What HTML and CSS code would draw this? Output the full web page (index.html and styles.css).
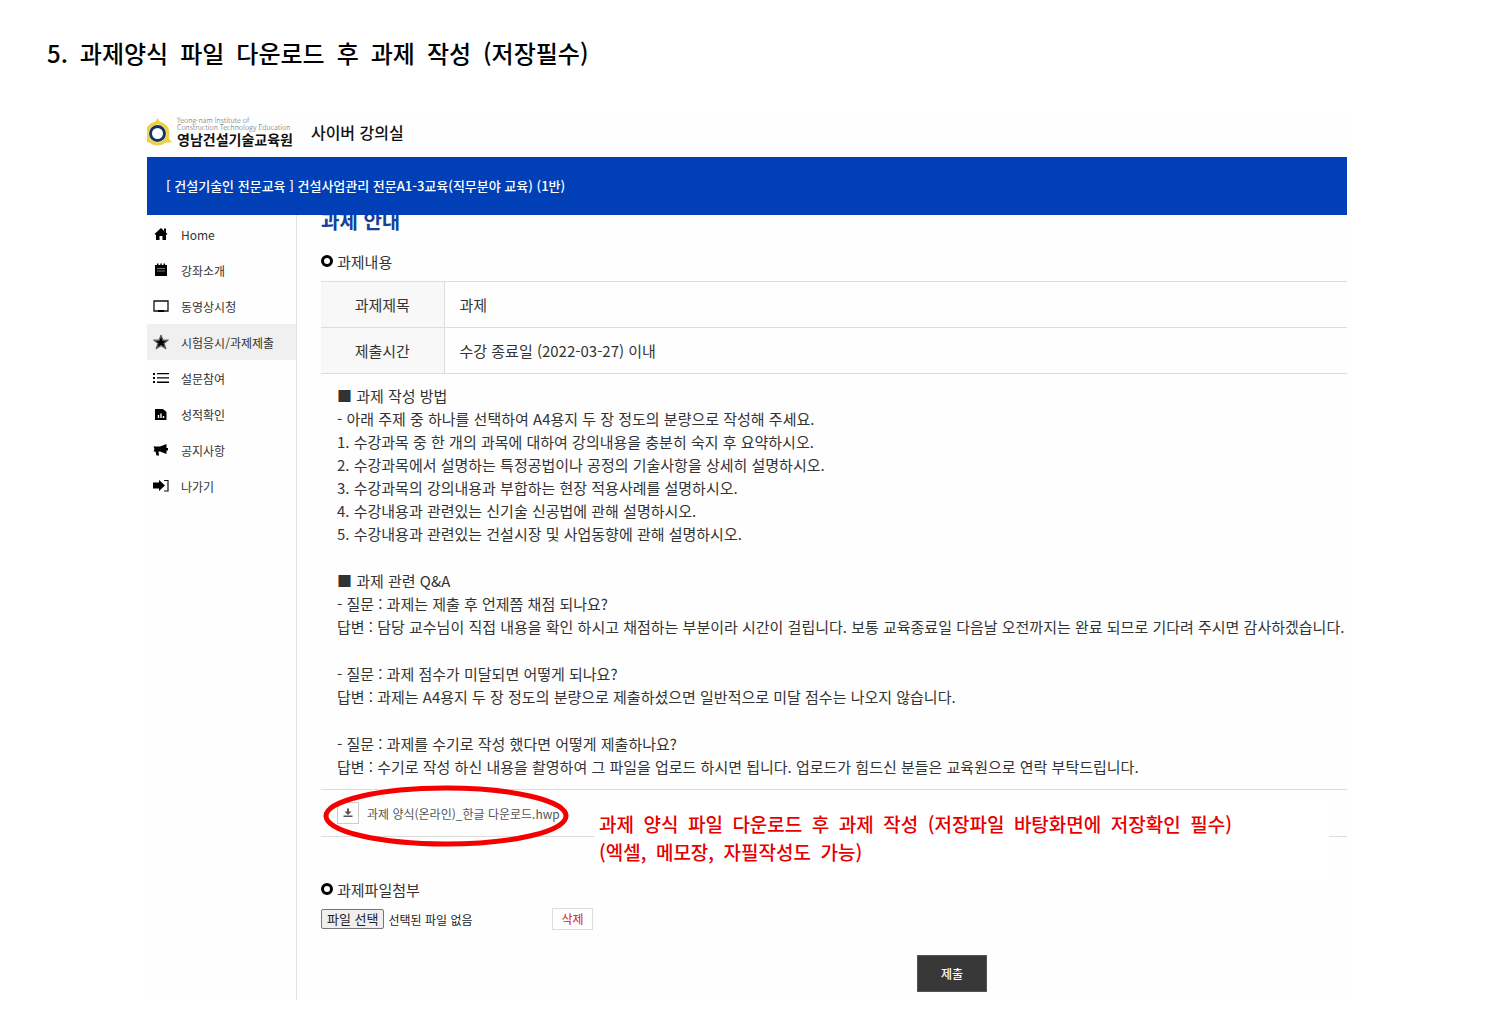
FILE: index.html
```html
<!DOCTYPE html>
<html lang="ko">
<head>
  <meta charset="UTF-8">
  <meta name="viewport" content="width=device-width, initial-scale=1.0">
  <title>사이버 강의실 - 과제 안내</title>
  <link rel="stylesheet" href="styles.css">
</head>
<body>
  <h1 class="step-title">5.&ensp;과제양식&ensp;파일&ensp;다운로드&ensp;후&ensp;과제&ensp;작성&ensp;(저장필수)</h1>

  <div class="classroom">
    <header class="site-header">
      <a class="logo" href="#">
        <svg class="logo-mark" viewBox="0 0 25 30" width="25" height="30">
          <path d="M10.500 1 L14 7 L7 7 Z M20 19 L25 25.500 L17 25.500 Z M0 19 L4 25.500 L0 25.500 Z" fill="#efcf45"/>
          <circle cx="10.500" cy="16.500" r="10.500" fill="#fff" stroke="#efcf45" stroke-width="3"/>
          <circle cx="10.500" cy="16.500" r="7" fill="#fff" stroke="#17345f" stroke-width="3"/>
        </svg>
        <span class="logo-text">
          <small>Yeong-nam Institute of</small>
          <small>Construction Technology Education</small>
          <strong>영남건설기술교육원</strong>
        </span>
      </a>
      <span class="site-name">사이버 강의실</span>
    </header>

    <div class="course-bar">[ 건설기술인 전문교육 ] 건설사업관리 전문A1-3교육(직무분야 교육) (1반)</div>

    <div class="content">
      <nav class="sidebar">
        <a href="#">
          <svg viewBox="0 0 16 16"><path d="M8 2 L14.500 8 L13 9 V14 H9.500 V10 H6.500 V14 H3 V9 L1.500 8 Z M11 2.500 H13 V6.500 L11 4.500 Z"/></svg>
          Home
        </a>
        <a href="#">
          <svg viewBox="0 0 16 16"><path d="M2 3 H4 V1.500 H5.500 V3 H7.300 V1.500 H8.700 V3 H10.500 V1.500 H12 V3 H14 V14 H2 Z"/><path d="M4 6.500 H12 M4 9 H12" stroke="#777" fill="none"/></svg>
          강좌소개
        </a>
        <a href="#">
          <svg viewBox="0 0 16 16"><path d="M1 3 H15 V13 H1 Z" fill="none" stroke="#111" stroke-width="1.300"/><path d="M5 12 H11 V14 H5 Z"/></svg>
          동영상시청
        </a>
        <a class="active" href="#">
          <svg viewBox="0 0 16 16"><path d="M8 1 L10 6 L15.500 6 L11.300 9.500 L13 15 L8 11.800 L3 15 L4.700 9.500 L0.500 6 L6 6 Z" fill="#777" stroke="#333" stroke-width=".7"/><path d="M8 3 L9.600 7 L13 7.200 L10.300 9.300 L11.500 13 L8 10.800 L4.500 13 L5.700 9.300 L3 7.200 L6.400 7 Z"/></svg>
          시험응시/과제제출
        </a>
        <a href="#">
          <svg viewBox="0 0 16 16"><path d="M0 3 H2 V5 H0 Z M0 7 H2 V9 H0 Z M0 11 H2 V13 H0 Z M4 3 H16 V4.300 H4 Z M4 7.300 H16 V8.600 H4 Z M4 11.600 H16 V12.900 H4 Z"/></svg>
          설문참여
        </a>
        <a href="#">
          <svg viewBox="0 0 16 16"><path d="M2 3 H10 L13.500 6 V14 H2 Z"/><path d="M5.500 12 V9 M8 12 V7.500 M10.500 12 V10" stroke="#fff" stroke-width="1.400"/></svg>
          성적확인
        </a>
        <a href="#">
          <svg viewBox="0 0 16 16"><path d="M0.500 4.500 H7 L13.500 2 V6 H15 V8.500 H13.500 V12 L7 9.500 H5.500 L6 13.500 H3.500 L2.500 9.500 H0.500 L1.500 7 Z"/></svg>
          공지사항
        </a>
        <a href="#">
          <svg viewBox="0 0 16 16"><path d="M0 4.500 H6 V2 L12 7.500 L6 13 V10.500 H0 Z"/><path d="M11 2.500 H15 V13 H11" fill="none" stroke="#111" stroke-width="1.200"/></svg>
          나가기
        </a>
      </nav>

      <main class="main">
        <h2 class="page-title">과제 안내</h2>

        <h3 class="section-title">과제내용</h3>
        <table class="info">
          <tr>
            <th scope="row">과제제목</th>
            <td>과제</td>
          </tr>
          <tr>
            <th scope="row">제출시간</th>
            <td>수강 종료일 (2022-03-27) 이내</td>
          </tr>
        </table>

        <div class="guide">
          <p>
            ■ 과제 작성 방법<br>
            - 아래 주제 중 하나를 선택하여 A4용지 두 장 정도의 분량으로 작성해 주세요.<br>
            1. 수강과목 중 한 개의 과목에 대하여 강의내용을 충분히 숙지 후 요약하시오.<br>
            2. 수강과목에서 설명하는 특정공법이나 공정의 기술사항을 상세히 설명하시오.<br>
            3. 수강과목의 강의내용과 부합하는 현장 적용사례를 설명하시오.<br>
            4. 수강내용과 관련있는 신기술 신공법에 관해 설명하시오.<br>
            5. 수강내용과 관련있는 건설시장 및 사업동향에 관해 설명하시오.
          </p>
          <p>
            ■ 과제 관련 Q&amp;A<br>
            - 질문 : 과제는 제출 후 언제쯤 채점 되나요?<br>
            답변 : 담당 교수님이 직접 내용을 확인 하시고 채점하는 부분이라 시간이 걸립니다. 보통 교육종료일 다음날 오전까지는 완료 되므로 기다려 주시면 감사하겠습니다.
          </p>
          <p>
            - 질문 : 과제 점수가 미달되면 어떻게 되나요?<br>
            답변 : 과제는 A4용지 두 장 정도의 분량으로 제출하셨으면 일반적으로 미달 점수는 나오지 않습니다.
          </p>
          <p>
            - 질문 : 과제를 수기로 작성 했다면 어떻게 제출하나요?<br>
            답변 : 수기로 작성 하신 내용을 촬영하여 그 파일을 업로드 하시면 됩니다. 업로드가 힘드신 분들은 교육원으로 연락 부탁드립니다.
          </p>
        </div>

        <div class="download">
          <a href="#">
            <span class="download-icon">
              <svg viewBox="0 0 10 10" width="10" height="10"><path d="M4 0.500 H6 V3.500 H8.500 L5 7 L1.500 3.500 H4 Z M0.500 7.500 H9.500 V9 H0.500 Z" fill="#555"/></svg>
            </span>
            과제 양식(온라인)_한글 다운로드.hwp
          </a>
          <svg class="circle-mark" viewBox="0 0 246 62"><ellipse cx="123" cy="31" rx="120" ry="28" fill="none" stroke="#f50000" stroke-width="5"/></svg>
          <p class="note">
            과제&ensp;양식&ensp;파일&ensp;다운로드&ensp;후&ensp;과제&ensp;작성&ensp;(저장파일&ensp;바탕화면에&ensp;저장확인&ensp;필수)<br>
            (엑셀,&ensp;메모장,&ensp;자필작성도&ensp;가능)
          </p>
        </div>

        <form>
          <h3 class="section-title">과제파일첨부</h3>
          <div class="file-row">
            <input type="file" id="homework" name="homework">
            <label class="file-button" for="homework">파일 선택</label>
            <span class="file-name">선택된 파일 없음</span>
            <button class="delete" type="button">삭제</button>
          </div>
          <div class="actions">
            <button class="submit" type="button">제출</button>
          </div>
        </form>
      </main>
    </div>
  </div>
</body>
</html>
```

FILE: styles.css
```css
*,
*::before {
  box-sizing: border-box;
}

body {
  margin: 0;
  background-color: #fff;
  color: #333;
  font-family: "Noto Sans CJK KR", sans-serif;
  font-size: 15px;
}

h1, h2, h3, p {
  margin: 0;
}

a {
  color: inherit;
  text-decoration: none;
}

.step-title {
  padding: 35px 47px 0;
  color: #000;
  font-size: 24px;
  font-weight: 500;
  line-height: 36px;
}

.classroom {
  margin: 44px 146px 18px 147px;
  background-color: #fefefe;
}

.site-header {
  display: flex;
  align-items: center;
  gap: 18px;
  height: 42px;
  padding-bottom: 8px;
  color: #111;
}

.logo {
  display: flex;
  align-items: center;
  gap: 5px;
}

.logo-text {
  display: flex;
  flex-direction: column;
}

.logo-text small {
  color: #666;
  font-size: 7px;
  font-weight: 300;
  line-height: 7px;
}

.logo-text strong {
  font-size: 14px;
  line-height: 16px;
}

.site-name {
  font-size: 16px;
  font-weight: 500;
}

.course-bar {
  padding: 0 19px;
  background-color: #003fb5;
  color: #fff;
  font-size: 13px;
  font-weight: 500;
  line-height: 58px;
}

.content {
  display: flex;
}

.sidebar {
  flex: 0 0 150px;
  padding-top: 1px;
  border-right: 1px solid #e4e4e4;
}

.sidebar a {
  display: flex;
  align-items: center;
  gap: 12px;
  height: 36px;
  padding-left: 6px;
  font-size: 12px;
}

.sidebar a.active {
  background-color: #f0f0f0;
}

.sidebar svg {
  width: 16px;
  height: 16px;
  fill: #000;
}

.main {
  flex: 1;
  min-width: 0;
  padding: 0 0 8px 24px;
}

/* the heading is scrolled partly under the blue bar */
.page-title {
  height: 32px;
  overflow: hidden;
  color: #143f9c;
  font-size: 20px;
  line-height: 12px;
}

.section-title {
  display: flex;
  align-items: center;
  gap: 4px;
  height: 28px;
  font-size: 15px;
  font-weight: 400;
}

.section-title::before {
  content: "";
  width: 12px;
  height: 12px;
  border: 3px solid #000;
  border-radius: 50%;
}

.info {
  width: 100%;
  margin-top: 6px;
  border-collapse: collapse;
}

.info th,
.info td {
  height: 46px;
  padding: 0 15px;
  border-top: 1px solid #ddd;
  border-bottom: 1px solid #ddd;
  font-weight: 400;
}

.info th {
  width: 123px;
  border-right: 1px solid #ddd;
  background-color: #f8f8f8;
}

.guide {
  padding: 10px 0 11px 16px;
  line-height: 23px;
}

.guide p + p {
  margin-top: 24px;
}

.download {
  position: relative;
  display: flex;
  align-items: center;
  height: 48px;
  padding-left: 16px;
  border-top: 1px solid #ddd;
  border-bottom: 1px solid #ddd;
  color: #555;
  font-size: 12px;
}

.download a {
  display: flex;
  align-items: center;
  gap: 8px;
}

.download-icon {
  display: flex;
  align-items: center;
  justify-content: center;
  width: 22px;
  height: 22px;
  border: 1px solid #ccc;
}

.circle-mark {
  position: absolute;
  top: -5px;
  left: 2px;
  width: 246px;
  height: 62px;
}

.note {
  position: absolute;
  top: 4px;
  left: 273px;
  right: 18px;
  padding: 16px 5px;
  background-color: #fff;
  color: #e60000;
  font-size: 19px;
  font-weight: 500;
  line-height: 28px;
}

form {
  padding-top: 38px;
}

.file-row {
  display: flex;
  align-items: center;
  gap: 4px;
  height: 32px;
  color: #222;
  font-size: 12px;
}

.file-row input {
  position: absolute;
  width: 1px;
  height: 1px;
  opacity: 0;
}

.file-button {
  padding: 0 5px;
  border: 1px solid #767676;
  border-radius: 2px;
  background-color: #efefef;
  font-size: 13px;
  line-height: 18px;
}

.file-name {
  width: 160px;
}

.delete {
  height: 22px;
  padding: 0 8px;
  border: 1px solid #ddd;
  background-color: #fff;
  color: #c9252b;
  font-family: inherit;
  font-size: 12px;
  line-height: 20px;
}

.actions {
  display: flex;
  justify-content: center;
  margin-top: 20px;
  padding-left: 23%;
}

.submit {
  width: 70px;
  height: 37px;
  border: 1px solid #555;
  background-color: #383838;
  color: #fff;
  font-family: inherit;
  font-size: 12px;
  font-weight: 500;
}
```
